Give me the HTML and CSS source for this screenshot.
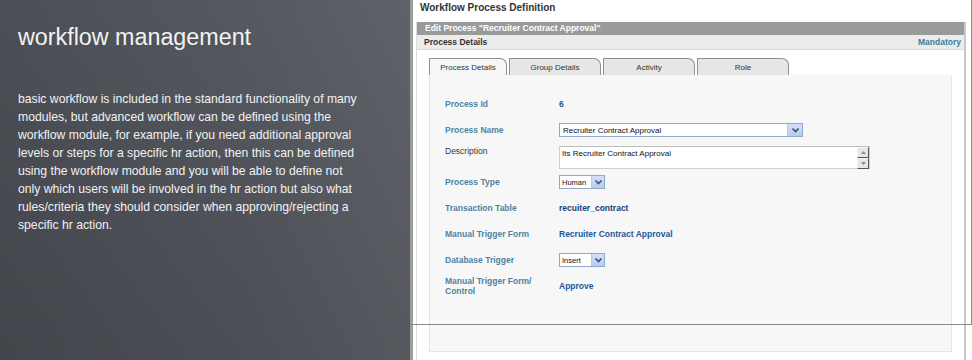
FILE: index.html
```html
<!DOCTYPE html>
<html>
  <head>
    <title>workflow management</title>
    <link rel="stylesheet" href="styles.css">
  </head>
  <body>
    <div class="page">
      <div class="intro">
        <h1>workflow management</h1>
        <p>basic workflow is included in the standard functionality of many modules, but advanced workflow can be defined using the workflow module, for example, if you need additional approval levels or steps for a specific hr action, then this can be defined using the workflow module and you will be able to define not only which users will be involved in the hr action but also what rules/criteria they should consider when approving/rejecting a specific hr action.</p>
      </div>

      <div class="shot">
        <div class="title">Workflow Process Definition</div>
        <div class="box">
          <div class="bar">Edit Process "Recruiter Contract Approval"</div>
          <div class="sub"><span>Process Details</span><span class="mand">Mandatory</span></div>
          <div class="body">
            <div class="tabs">
              <div class="tab on">Process Details</div>
              <div class="tab">Group Details</div>
              <div class="tab">Activity</div>
              <div class="tab">Role</div>
            </div>
            <div class="panel">
              <div class="row">
                <div class="lbl">Process Id</div>
                <div class="val">6</div>
              </div>
              <div class="row">
                <div class="lbl">Process Name</div>
                <div class="sel wide"><span>Recruiter Contract Approval</span><b class="arr"><svg width="9" height="6" viewBox="0 0 9 6"><polyline points="1.5,1.5 4.5,4.5 7.5,1.5" fill="none" stroke="#3b4f78" stroke-width="1.6"/></svg></b></div>
              </div>
              <div class="row">
                <div class="lbl plain">Description</div>
                <div class="area"><span>Its Recruiter Contract Approval</span>
                  <div class="scroll">
                    <i><svg width="5" height="3" viewBox="0 0 5 3"><polygon points="0,3 2.5,0 5,3" fill="#8a8a8a"/></svg></i>
                    <i><svg width="5" height="3" viewBox="0 0 5 3"><polygon points="0,0 2.5,3 5,0" fill="#8a8a8a"/></svg></i>
                  </div>
                </div>
              </div>
              <div class="row">
                <div class="lbl">Process Type</div>
                <div class="sel small"><span>Human</span><b class="arr"><svg width="9" height="6" viewBox="0 0 9 6"><polyline points="1.5,1.5 4.5,4.5 7.5,1.5" fill="none" stroke="#3b4f78" stroke-width="1.6"/></svg></b></div>
              </div>
              <div class="row">
                <div class="lbl">Transaction Table</div>
                <div class="val dark">recuiter_contract</div>
              </div>
              <div class="row">
                <div class="lbl">Manual Trigger Form</div>
                <div class="val">Recruiter Contract Approval</div>
              </div>
              <div class="row">
                <div class="lbl">Database Trigger</div>
                <div class="sel small"><span>Insert</span><b class="arr"><svg width="9" height="6" viewBox="0 0 9 6"><polyline points="1.5,1.5 4.5,4.5 7.5,1.5" fill="none" stroke="#3b4f78" stroke-width="1.6"/></svg></b></div>
              </div>
              <div class="row">
                <div class="lbl">Manual Trigger Form/<br>Control</div>
                <div class="val">Approve</div>
              </div>
            </div>
          </div>
        </div>
        <div class="frame"></div>
      </div>
    </div>
  </body>
</html>
```

FILE: styles.css
```css
body { margin: 0; background: #fff; }
.page { display: flex; width: 972px; height: 360px; overflow: hidden; }

/* left text side */
.intro {
  width: 410px; flex: none; box-sizing: border-box;
  padding: 23px 18px 0 18px;
  color: #f2f2f2;
  font-family: "Liberation Sans", Arial, sans-serif;
  background:
    linear-gradient(to bottom, rgba(255,255,255,0.03), rgba(0,0,0,0.06)),
    linear-gradient(to right, #46494f, #50535a 60%, #5a5d63);
}
.intro h1 { margin: 0; font-weight: normal; font-size: 23.3px; line-height: 28px; }
.intro p { margin: 39px 0 0 0; width: 346px; font-size: 12.2px; line-height: 18px; }

/* screenshot side */
.shot {
  position: relative; flex: 1;
  border-left: 3px solid #9c9c9c;
  font-family: "Liberation Sans", Arial, sans-serif;
  color: #333;
}
.title { height: 22px; box-sizing: border-box; padding: 2px 0 0 7px; font-size: 10px; font-weight: bold; color: #333; }
.box { margin: 0 6px 0 3px; border-left: 1px solid #dcdcdc; border-right: 2px solid #c8c8c8; height: 338px; }
.bar { height: 13px; line-height: 13px; background: #9a9a9a; color: #fff; font-size: 8.5px; font-weight: bold; padding-left: 8px; }
.sub {
  display: flex; justify-content: space-between;
  height: 14px; line-height: 14px; background: #ececec; border-bottom: 1px solid #dadada;
  font-size: 8.5px; font-weight: bold; padding: 0 3px 0 7px;
}
.mand { color: #3d7c9c; }

.body { padding: 8px 12px 0 12px; }
.tabs { display: flex; gap: 2px; height: 17px; }
.tab {
  width: 92px; box-sizing: border-box; height: 17px;
  border: 1px solid #8f8f8f; border-bottom: none; border-top-right-radius: 7px;
  background: #e6e6e6; font-size: 8px; text-align: center; line-height: 17px; color: #333;
}
.tab.on { width: 78px; background: #f6f6f6; }
.panel {
  height: 277px; box-sizing: border-box;
  background: #f7f7f7; border: 1px solid #e4e4e4; border-top-color: #f7f7f7;
  padding: 15px 0 0 15px;
  display: grid; grid-auto-rows: 26px; align-content: start;
}
.row { display: flex; align-items: center; }
.lbl { width: 114px; flex: none; font-size: 8.5px; font-weight: bold; color: #4f82a2; line-height: 10px; }
.lbl.plain { font-weight: normal; color: #3a3a3a; align-self: flex-start; margin-top: 3px; }
.val { font-size: 8.5px; font-weight: bold; color: #21579a; }
.val.dark { color: #1d3f6e; }

.sel {
  display: flex; align-items: center; justify-content: space-between;
  height: 14px; box-sizing: border-box; background: #fff;
  border: 1px solid #8ea9c9; font-size: 8px; color: #111; padding-left: 3px;
}
.sel.wide { width: 244px; }
.sel.small { width: 46px; font-size: 7.5px; padding-left: 2px; }
.arr {
  width: 14px; height: 12px; flex: none; display: flex; align-items: center; justify-content: center;
  background: linear-gradient(#d4e0f8, #b7caef); border-left: 1px solid #b9cbe9;
}
.sel.small .arr { width: 12px; }
.area {
  position: relative; width: 311px; height: 23px; box-sizing: border-box;
  background: #fff; border: 1px solid #cfcfcf; border-top-color: #bdbdbd;
  font-size: 8px; color: #111; padding: 2px 0 0 2px;
  display: flex; justify-content: space-between; align-items: flex-start;
  margin-top: 3px; align-self: flex-start;
}
.scroll { display: flex; flex-direction: column; margin-top: -2px; }
.scroll i {
  width: 12px; height: 11px; box-sizing: border-box; display: flex; align-items: center; justify-content: center;
  background: #e7e7e7; border: 1px solid #f4f4f4; border-right-color: #555; border-bottom-color: #555;
}

.frame {
  position: absolute; left: -3px; top: 0; width: 562px; height: 325px; box-sizing: border-box;
  border-right: 1px solid #898989; border-bottom: 1px solid #898989;
}
```
